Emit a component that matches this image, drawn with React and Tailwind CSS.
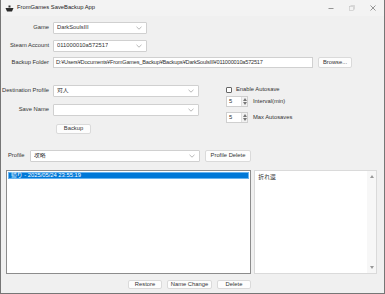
import React from "react";

const Chevron = () => (
  <svg width="6" height="4" viewBox="0 0 6 4" className="shrink-0">
    <path d="M0.5 0.8 L3 3.2 L5.5 0.8" fill="none" stroke="#888" strokeWidth="0.6" />
  </svg>
);

const Combo = ({ value, className }) => (
  <div className={`flex items-center justify-between bg-white border border-[#d0d0d0] rounded-[1px] pl-[3px] pr-[4px] ${className}`}>
    <span className="truncate">{value}</span>
    <Chevron />
  </div>
);

const Button = ({ children, className }) => (
  <div className={`flex items-center justify-center bg-[#fdfdfd] border border-[#dadada] rounded-[2px] whitespace-nowrap ${className}`}>
    {children}
  </div>
);

const Spin = ({ value }) => (
  <div className="flex w-[22px] h-[11px] bg-white border border-[#cfcfcf]">
    <span className="flex-1 pl-[2px] leading-[9px]">{value}</span>
    <div className="flex flex-col items-center justify-center gap-[1px] w-[6px] bg-[#f2f2f2] border-l border-[#e0e0e0]">
      <svg width="4" height="3" viewBox="0 0 4 3"><path d="M0 3 L2 0 L4 3Z" fill="#777" /></svg>
      <svg width="4" height="3" viewBox="0 0 4 3"><path d="M0 0 L2 3 L4 0Z" fill="#777" /></svg>
    </div>
  </div>
);

const Label = ({ children }) => (
  <div className="w-[52px] text-right pr-[4px] shrink-0 whitespace-nowrap">{children}</div>
);

export default function App() {
  return (
    <div
      className="w-[385px] h-[294px] flex flex-col bg-[#f0f0f0] border-x border-b border-[#767676] text-[5.8px] leading-none text-[#333] overflow-hidden"
      style={{ fontFamily: '"Liberation Sans", "Noto Sans CJK JP", sans-serif' }}
    >
      {/* Title bar */}
      <div className="flex items-center h-[16px] bg-[#f3f3f3] shrink-0">
        <svg width="9" height="7" viewBox="0 0 9 7" className="ml-[4px] mr-[3px]">
          <path d="M3.5 0.5 h2 v2 h-2z" fill="#333" />
          <path d="M0.5 3 h8 l-1.5 3.5 h-5z" fill="#2b2b2b" />
        </svg>
        <span className="text-[5.8px] text-[#222]">FromGames SaveBackup App</span>
        <div className="ml-auto flex items-center gap-[15px] pr-[8px]">
          <svg width="6" height="6" viewBox="0 0 6 6"><path d="M0.5 3.5 h5" stroke="#555" strokeWidth="0.6" /></svg>
          <svg width="6" height="6" viewBox="0 0 6 6">
            <rect x="0.5" y="1.5" width="4" height="4" fill="none" stroke="#c4c4c4" strokeWidth="0.6" />
            <path d="M1.5 0.5 h4 v4" fill="none" stroke="#c4c4c4" strokeWidth="0.6" />
          </svg>
          <svg width="6" height="6" viewBox="0 0 6 6"><path d="M0.5 0.5 L5.5 5.5 M5.5 0.5 L0.5 5.5" stroke="#555" strokeWidth="0.6" /></svg>
        </div>
      </div>

      <div className="flex flex-col flex-1 pr-[7px]">
        {/* Game */}
        <div className="flex items-center mt-[6px]">
          <Label>Game</Label>
          <Combo value="DarkSoulsIII" className="w-[94px] h-[12px]" />
        </div>
        {/* Steam account */}
        <div className="flex items-center mt-[6px]">
          <Label>Steam Account</Label>
          <Combo value="011000010a572517" className="w-[94px] h-[12px]" />
        </div>
        {/* Backup folder */}
        <div className="flex items-center mt-[5px]">
          <Label>Backup Folder</Label>
          <div className="w-[260px] h-[11px] bg-white border border-[#d0d0d0] pl-[2px] flex items-center whitespace-nowrap overflow-hidden text-[5.6px] tracking-[-0.2px]">
            D:¥Users¥Documents¥FromGames_Backup¥Backups¥DarkSoulsIII¥011000010a572517
          </div>
          <Button className="ml-[5px] w-[34px] h-[11px]">Browse...</Button>
        </div>

        {/* Backup + autosave */}
        <div className="flex mt-[17px]">
          <div className="flex flex-col">
            <div className="flex items-center">
              <Label>Destination Profile</Label>
              <Combo value="対人" className="w-[146px] h-[12px]" />
            </div>
            <div className="flex items-center mt-[7px]">
              <Label>Save Name</Label>
              <Combo value="" className="w-[146px] h-[12px]" />
            </div>
            <Button className="ml-[55px] mt-[8px] w-[35px] h-[10px]">Backup</Button>
          </div>
          <div className="flex flex-col ml-[27px] pt-[2px]">
            <div className="flex items-center gap-[4px]">
              <div className="w-[6px] h-[6px] border border-[#666] rounded-[1px] bg-white" />
              <span>Enable Autosave</span>
            </div>
            <div className="flex items-center gap-[5px] mt-[3px]">
              <Spin value="5" />
              <span>Interval(min)</span>
            </div>
            <div className="flex items-center gap-[5px] mt-[5px]">
              <Spin value="5" />
              <span>Max Autosaves</span>
            </div>
          </div>
        </div>

        {/* Profile */}
        <div className="flex items-center mt-[16px] pl-[7px]">
          <span className="w-[22px]">Profile</span>
          <Combo value="攻略" className="w-[170px] h-[12px]" />
          <Button className="ml-[5px] w-[46px] h-[12px]">Profile Delete</Button>
        </div>

        {/* Lists */}
        <div className="flex mt-[8px] pl-[5px] h-[104px]">
          <div className="w-[246px] h-full bg-white border border-[#8c8c8c] p-[1px]">
            <div className="h-[7px] bg-[#0078d7] text-white pl-[2px] flex items-center border border-[#66b3f0]">
              帰り - 2025/05/24 23:55:19
            </div>
          </div>
          <div className="flex ml-[3px] w-[123px] h-full bg-white border border-[#dadada]">
            <div className="flex-1 pl-[3px] pt-[4px]">折れ還</div>
            <div className="w-[9px] flex flex-col items-center justify-between py-[4px] bg-[#f7f7f7]">
              <svg width="4" height="3" viewBox="0 0 4 3"><path d="M0 3 L2 0 L4 3Z" fill="#999" /></svg>
              <svg width="4" height="3" viewBox="0 0 4 3"><path d="M0 0 L2 3 L4 0Z" fill="#999" /></svg>
            </div>
          </div>
        </div>

        {/* Buttons */}
        <div className="flex mt-[6px] pl-[127px] gap-[5px]">
          <Button className="w-[34px] h-[9px]">Restore</Button>
          <Button className="w-[45px] h-[9px]">Name Change</Button>
          <Button className="w-[34px] h-[9px]">Delete</Button>
        </div>
      </div>
    </div>
  );
}
